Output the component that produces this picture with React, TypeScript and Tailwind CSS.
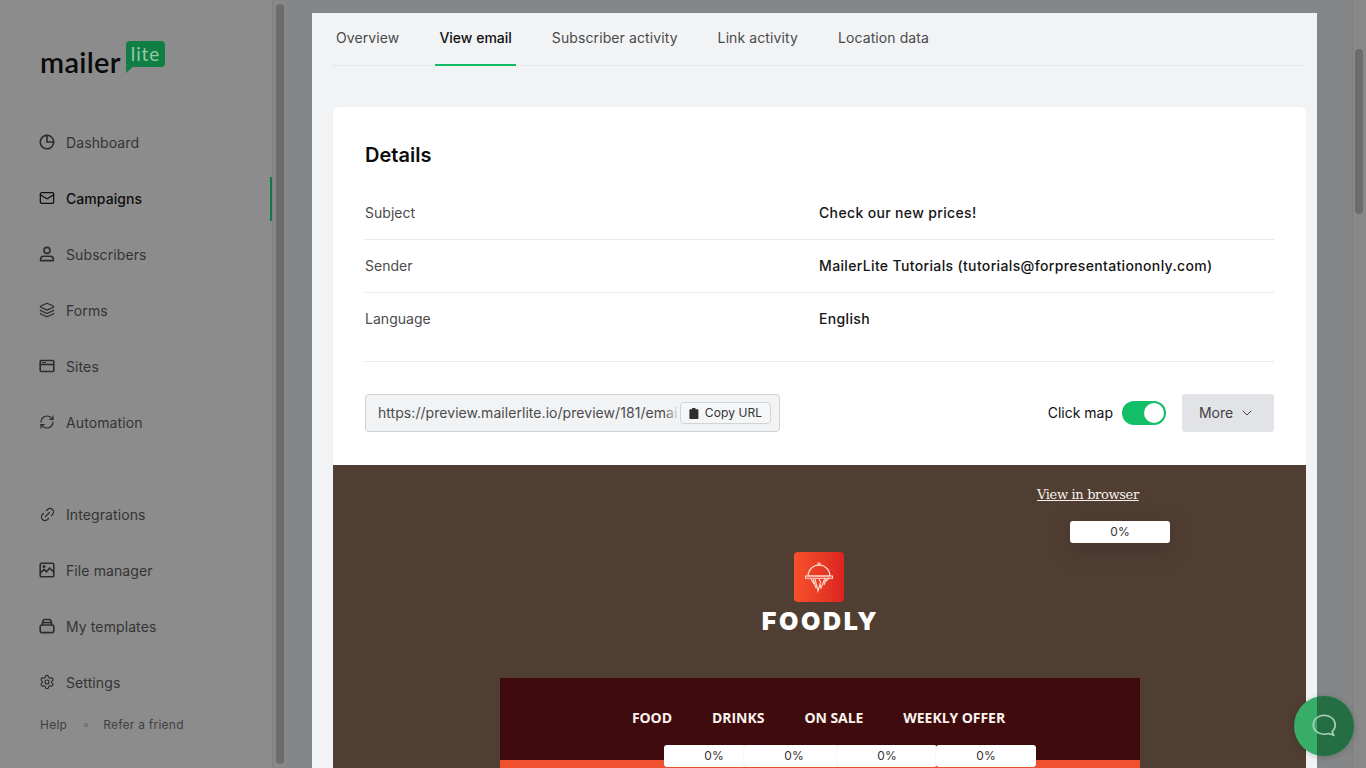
import React from "react";
import { Mail, Layers, RefreshCw, Link2, Settings, ChevronDown } from "lucide-react";

const S = 1.6;
const Clock = () => (
  <svg width="16" height="16" viewBox="0 0 16 16" fill="none" stroke="currentColor" strokeWidth={S} strokeLinecap="round">
    <path d="M14.6 8.6A6.7 6.7 0 1 1 7.4 1.4" />
    <path d="M8 1.3a6.7 6.7 0 0 1 6.7 6.7H8z" />
  </svg>
);
const Person = () => (
  <svg width="16" height="16" viewBox="0 0 16 16" fill="none" stroke="currentColor" strokeWidth={S} strokeLinejoin="round">
    <circle cx="8" cy="4.4" r="3" />
    <path d="M1.6 14.600v-1.400c0-1.800 1.500-3 3.200-3h6.400c1.700 0 3.200 1.200 3.200 3v1.400z" />
  </svg>
);
const Browser = () => (
  <svg width="16" height="16" viewBox="0 0 16 16" fill="none" stroke="currentColor" strokeWidth={S}>
    <rect x="1.200" y="2.500" width="13.600" height="11" rx="1" />
    <path d="M1.200 6.500h13.600" />
    <path d="M3 4.600h4" strokeWidth="1" />
  </svg>
);
const Picture = () => (
  <svg width="16" height="16" viewBox="0 0 16 16" fill="none" stroke="currentColor" strokeWidth={S} strokeLinejoin="round">
    <rect x="1.200" y="1.200" width="13.600" height="13.600" rx="1.400" />
    <path d="M1.400 11l3.600-3.600 2.600 2.400 3-3.800 3.800 3.600" />
    <circle cx="5" cy="4.600" r=".7" fill="currentColor" />
  </svg>
);
const Template = () => (
  <svg width="16" height="16" viewBox="0 0 16 16" fill="none" stroke="currentColor" strokeWidth={S}>
    <rect x="1.200" y="7" width="13.600" height="7.600" rx="1.800" />
    <path d="M3 7l1-4.200c.2-.8.7-1.300 1.500-1.300h5c.8 0 1.300.5 1.500 1.300l1 4.200" />
    <path d="M3 4.600h10" />
  </svg>
);
const Clipboard = () => (
  <svg width="10" height="11" viewBox="0 0 10 11" fill="#2e2e2e">
    <path d="M3.200 0h3.200v1.200H8.600c.4 0 .8.4.8.8v8.200c0 .4-.4.8-.8.8H1.200c-.4 0-.8-.4-.8-.8V2c0-.4.4-.8.8-.8h2z" />
  </svg>
);

const top = [
  { label: "Dashboard", icon: <Clock /> },
  { label: "Campaigns", icon: <Mail size={16} strokeWidth={1.8} />, active: true },
  { label: "Subscribers", icon: <Person /> },
  { label: "Forms", icon: <Layers size={16} strokeWidth={1.8} /> },
  { label: "Sites", icon: <Browser /> },
  { label: "Automation", icon: <RefreshCw size={16} strokeWidth={1.8} /> },
];
const bottom = [
  { label: "Integrations", icon: <Link2 size={17} strokeWidth={1.7} className="-rotate-45" /> },
  { label: "File manager", icon: <Picture /> },
  { label: "My templates", icon: <Template /> },
  { label: "Settings", icon: <Settings size={16} strokeWidth={1.7} /> },
];

function NavItem({ label, icon, active }: { label: string; icon: React.ReactNode; active?: boolean }) {
  return (
    <div className={`relative flex h-14 items-center pl-10 text-[14px] ${active ? "font-medium tracking-[0.05px] text-[#0d0d0d]" : "tracking-[0.1px] text-[#343434]"}`}>
      <span className={`-ml-[1px] flex w-[27px] ${active ? "text-[#0d0d0d]" : "text-[#2c2c2c]"}`}>{icon}</span>
      {label}
      {active && <span className="absolute right-0 top-[7px] h-11 w-[2px] bg-[#0f7a47]" />}
    </div>
  );
}

function Sidebar() {
  return (
    <aside className="flex h-full w-[272px] shrink-0 flex-col bg-[#8c8c8c]">
      <div className="flex h-[114px] items-start pl-10 pt-[41px]">
        <span className="mt-[6px] w-[86px] font-['Lato',sans-serif] text-[29px] font-semibold leading-[30px] tracking-[0.3px] text-[#0a0a0a]">mailer</span>
        <span className="relative flex h-[26px] w-[39px] items-center justify-center rounded-[4px] bg-[#0f7f45] pb-[1px] font-['Lato',sans-serif] text-[19px] leading-none tracking-[0.9px] text-[#97c7a8]">
          lite
          <svg className="absolute left-0 top-[25px]" width="8" height="7" viewBox="0 0 8 7"><path d="M0 0h8L0 7z" fill="#0f7f45" /></svg>
        </span>
      </div>
      {top.map((i) => <NavItem key={i.label} {...i} />)}
      <div className="h-9 shrink-0" />
      {bottom.map((i) => <NavItem key={i.label} {...i} />)}
      <div className="flex items-center pl-10 pt-[7px] text-[12px] leading-4 tracking-[0.25px] text-[#404040]">
        <span>Help</span>
        <span className="ml-[17px] mr-[15px] h-1 w-1 bg-[#767676]" />
        <span>Refer a friend</span>
      </div>
    </aside>
  );
}

function Bar({ thumb }: { thumb: string }) {
  return (
    <div className={`h-full w-[14px] shrink-0 border-l border-[#7f7f7f] bg-[#888888] ${thumb}`}>
      <div className="h-full w-[8px] rounded-full bg-[#6c6c6c]" />
    </div>
  );
}

const tabs = ["Overview", "View email", "Subscriber activity", "Link activity", "Location data"];

function Row({ k, v }: { k: string; v: string }) {
  return (
    <div className="flex h-[53px] items-center border-b border-[#e8e9eb] pb-[1px] text-[14px]">
      <span className="w-[454px] tracking-[0.03px] text-[#4b4b4b]">{k}</span>
      <span className="font-medium tracking-[0.35px] text-[#151515]">{v}</span>
    </div>
  );
}

function Chip({ cls }: { cls: string }) {
  return (
    <div className={`absolute flex h-[22px] w-[100px] items-center justify-center rounded-[3px] bg-white font-['Inter',sans-serif] text-[12px] text-[#333333] shadow-[0_0_1px_rgba(0,0,0,0.3)] ${cls}`}>
      0%
    </div>
  );
}

function Email() {
  return (
    <div className="relative h-[303px] overflow-hidden bg-[#513e33]">
      <div className="ml-[704px] pt-[21px] font-['DejaVu_Serif',serif] text-[13px] leading-[18px] tracking-[-0.35px] text-[#f7f0ea] underline">View in browser</div>
      <Chip cls="left-[737px] top-[56px] shadow-[0_6px_24px_rgba(0,0,0,0.18)]" />
      <div className="mt-[48px] flex flex-col items-center pr-[1px]">
        <div className="flex h-[50px] w-[50px] items-center justify-center rounded-[4px] bg-gradient-to-r from-[#f6502c] to-[#dc2320]">
          <svg className="mt-[2px]" width="34" height="36" viewBox="0 0 34 36" fill="none" stroke="#ffdcd0" strokeWidth="1.100">
            <circle cx="17" cy="4" r="1.200" />
            <path d="M6 16c0-6 5-11 11-11s11 5 11 11z" />
            <path d="M3.500 16h27v2.200h-27z" />
            <path d="M9 19l3 5M13 19l3 12 2-7 1 4 4-10M11 19l3 9M17 19l2 4M24 19l-2 6M27 18l-4 4" />
          </svg>
        </div>
        <div className="ml-[3px] mt-[3px] font-['Inter',sans-serif] text-[25px] font-black leading-[32px] tracking-[2.6px] text-white">FOODLY</div>
      </div>
      <div className="mx-auto mt-[41px] flex h-[82px] w-[640px] items-start justify-center gap-10 bg-[#3f0b0d] pr-[2px] pt-[30px] font-['Open_Sans',sans-serif] text-[14px] font-bold leading-5 tracking-[-0.05px] text-[#fbf3ef]">
        <span>FOOD</span><span>DRINKS</span><span>ON SALE</span><span>WEEKLY OFFER</span>
      </div>
      <div className="mx-auto h-10 w-[640px] bg-[#f0512f]" />
      <Chip cls="left-[331px] top-[280px]" />
      <Chip cls="left-[411px] top-[280px]" />
      <Chip cls="left-[504px] top-[280px]" />
      <Chip cls="left-[603px] top-[280px]" />
    </div>
  );
}

export default function App() {
  return (
    <div className="relative flex h-screen w-full overflow-hidden bg-[#858688] font-['Inter',sans-serif]">
      <Sidebar />
      <Bar thumb="pl-[3px] py-[4px]" />
      <main className="h-full flex-1 pl-[26px] pt-[13px]">
        <div className="h-[755px] w-[1005px] overflow-hidden bg-[#f2f3f5] pl-[20px] pr-[12px]">
          <nav className="flex h-[53px] gap-8 border-b border-[#e7e8ea] text-[14px]">
            {tabs.map((t) => (
              <div key={t} className={`h-[53px] px-1 pt-[15px] leading-5 ${t === "View email" ? "border-b-2 border-[#16bc65] font-medium text-[#111111]" : "tracking-[0.1px] text-[#4a4a4a]"}`}>{t}</div>
            ))}
          </nav>
          <section className="ml-[1px] mt-[41px] h-[700px] w-[973px] overflow-hidden rounded-t-md bg-white">
            <div className="px-8">
              <h2 className="pt-[35px] text-[20px] font-semibold leading-[26px] text-[#0c0c0c]">Details</h2>
              <div className="mt-[19px]">
                <Row k="Subject" v="Check our new prices!" />
                <Row k="Sender" v="MailerLite Tutorials (tutorials@forpresentationonly.com)" />
                <div className="flex h-[69px] items-start border-b border-[#e8e9eb] pt-[16px] text-[14px] leading-5">
                  <span className="w-[454px] tracking-[0.03px] text-[#4b4b4b]">Language</span>
                  <span className="font-medium tracking-[0.35px] text-[#151515]">English</span>
                </div>
              </div>
              <div className="mt-[32px] flex h-[38px] items-center justify-between">
                <div className="flex h-[38px] w-[415px] items-center overflow-hidden rounded-[4px] border border-[#cfd0d2] bg-[#f2f3f5] pl-3 pr-2 text-[14px] tracking-[0.05px] text-[#4b4b4b]">
                  <span className="relative h-5 w-[302px] whitespace-nowrap leading-5">
                    https://preview.mailerlite.io/preview/181/emai
                    <span className="absolute right-0 top-0 h-full w-4 bg-gradient-to-r from-transparent to-[#f2f3f5]" />
                  </span>
                  <span className="flex h-[22px] w-[91px] items-center justify-center gap-[6px] rounded-[4px] border border-[#d2d3d5] bg-[#f5f6f7] text-[12px] tracking-[0.1px] text-[#333333]">
                    <Clipboard />Copy URL
                  </span>
                </div>
                <div className="flex items-center">
                  <span className="pb-[1px] text-[14px] text-[#111111]">Click map</span>
                  <span className="ml-[9px] flex h-6 w-[44px] items-center justify-end rounded-full bg-[#12bf66] pr-[2px]">
                    <span className="h-5 w-5 rounded-full bg-white" />
                  </span>
                  <span className="ml-4 flex h-[38px] w-[92px] items-center justify-center gap-[6px] rounded-[3px] bg-[#e2e3e6] pb-[1px] pr-[2px] text-[14px] text-[#3f3f3f]">
                    More<ChevronDown size={16} strokeWidth={1.5} />
                  </span>
                </div>
              </div>
            </div>
            <div className="mt-[33px]"><Email /></div>
          </section>
        </div>
      </main>
      <Bar thumb="pl-[2px] pt-[49px] pb-[554px]" />
      <div className="absolute left-[1294px] top-[696px] flex h-[60px] w-[60px] overflow-hidden rounded-full bg-[#38ad67] shadow-[0_1px_6px_rgba(0,0,0,0.2)]">
        <div className="absolute right-0 top-0 h-full w-[37px] bg-[#256d43]" />
        <svg className="absolute left-[18px] top-[18px]" width="25" height="25" viewBox="0 0 25 25" fill="none" stroke="#a9d3b8" strokeWidth="1.600">
          <path d="M12.200 1.300c6 0 11 4 11 9.600 0 3-1.300 5-3 6.600l1.400 3.600-4.600-1.600c-1.500.5-3 .7-4.800.7C6 20.300 1.300 16.500 1.300 10.900 1.300 5.300 6.200 1.300 12.200 1.300z" />
        </svg>
      </div>
    </div>
  );
}
